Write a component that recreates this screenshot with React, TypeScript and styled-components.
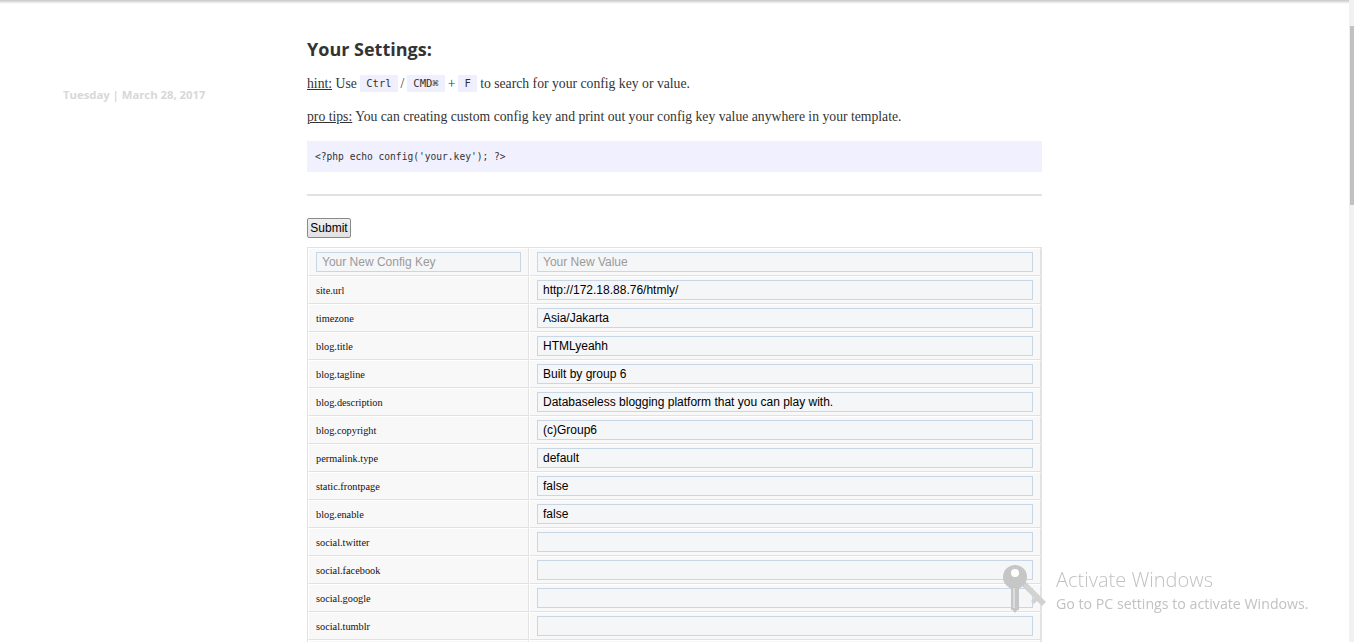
import React from "react";
import styled, { createGlobalStyle } from "styled-components";

const GlobalStyle = createGlobalStyle`
  html, body {
    margin: 0;
    padding: 0;
    background: #ffffff;
    overflow: hidden;
  }
  body {
    font-family: "Liberation Serif", "Times New Roman", serif;
    color: #333333;
  }
  * { box-sizing: border-box; }
`;

const TopShadow = styled.div`
  position: fixed;
  top: 0;
  left: 0;
  right: 5px;
  height: 4px;
  background: linear-gradient(to bottom, rgba(0, 0, 0, 0.22), rgba(0, 0, 0, 0));
  z-index: 5;
`;

const ScrollTrack = styled.div`
  position: fixed;
  top: 0;
  right: 0;
  width: 5px;
  height: 100vh;
  background: #f1f1f1;
  z-index: 6;
`;

const ScrollThumb = styled.div`
  position: absolute;
  top: 26px;
  right: 0;
  width: 4px;
  height: 179px;
  background: #c1c1c1;
`;

const Page = styled.div`
  display: grid;
  grid-template-columns: 244px 735px;
  padding-left: 63px;
  padding-top: 37px;
`;

const Aside = styled.aside`
  padding-top: 50px;
`;

const DateLine = styled.div`
  font-family: "Open Sans", "Liberation Sans", sans-serif;
  font-weight: 700;
  font-size: 11.3px;
  line-height: 15px;
  color: #d8d8d8;
  letter-spacing: 0px;
`;

const Main = styled.main`
  display: flex;
  flex-direction: column;
`;

const Title = styled.h2`
  margin: 0;
  font-family: "Open Sans", "Liberation Sans", sans-serif;
  font-weight: 700;
  font-size: 18px;
  line-height: 24px;
  color: #333333;
`;

const Para = styled.p<{ $gap: number }>`
  margin: ${(p) => p.$gap}px 0 0;
  font-size: 13.7px;
  line-height: 20px;
  color: #333333;
  white-space: nowrap;
`;

const Underline = styled.u`
  text-decoration: underline;
`;

const Kbd = styled.code`
  display: inline-block;
  font-family: "DejaVu Sans Mono", "Liberation Mono", monospace;
  font-size: 10.5px;
  line-height: 17px;
  padding: 0 6px;
  background: #f0effd;
  color: #333333;
  vertical-align: 1px;
`;

const Sep = styled.span`
  margin: 0 3px;
`;

const CodeBlock = styled.pre`
  margin: 14px 0 0;
  height: 31px;
  display: flex;
  align-items: center;
  padding: 0 8px;
  background: #f1f0fe;
  font-family: "DejaVu Sans Mono", "Liberation Mono", monospace;
  font-size: 9.6px;
  color: #333333;
`;

const Rule = styled.hr`
  margin: 22px 0 0;
  border: 0;
  height: 2px;
  background: #e2e2e2;
`;

const ButtonRow = styled.div`
  margin-top: 22px;
`;

const SubmitButton = styled.button`
  width: 44px;
  height: 20px;
  padding: 0;
  font-family: "Liberation Sans", Arial, sans-serif;
  font-size: 12px;
  color: #000;
  background: linear-gradient(#f0f0f0, #e1e1e1);
  border: 1px solid #8a8a8a;
  border-radius: 2px;
`;

const Table = styled.table`
  margin-top: 9px;
  width: 735px;
  table-layout: fixed;
  border-collapse: separate;
  border-spacing: 0;
  border: 1px solid #e2e2e2;
`;

const Cell = styled.td<{ $w: number }>`
  width: ${(p) => p.$w}px;
  padding: 3px 7px;
  background: #f8f8f8;
  border-top: 1px solid #ffffff;
  border-left: 1px solid #ffffff;
  border-right: 1px solid #e2e2e2;
  border-bottom: 1px solid #e2e2e2;
  font-family: "Liberation Serif", "Times New Roman", serif;
  font-size: 10.3px;
  color: #111;
  height: 28px;
  vertical-align: middle;
`;

const Field = styled.input`
  display: block;
  width: 100%;
  height: 20px;
  margin: 0;
  padding: 0 5px;
  border: 1px solid #c8d6e6;
  background: #f5f6f8;
  font-family: "Liberation Sans", Arial, sans-serif;
  font-size: 12px;
  color: #000;
  outline: none;
  &::placeholder {
    color: #9a9a9a;
  }
`;

const Watermark = styled.div`
  position: fixed;
  left: 1002px;
  top: 564px;
  display: flex;
  gap: 8px;
  pointer-events: none;
  z-index: 4;
`;

const WatermarkText = styled.div`
  display: flex;
  flex-direction: column;
  font-family: "Open Sans", "Liberation Sans", sans-serif;
  color: #c2c2c2;
  padding-top: 4px;
`;

const WmTitle = styled.div`
  font-size: 20px;
  font-weight: 300;
  line-height: 24px;
`;

const WmSub = styled.div`
  font-size: 14.2px;
  font-weight: 400;
  line-height: 20px;
  margin-top: 2px;
`;

const rows: [string, string][] = [
  ["site.url", "http://172.18.88.76/htmly/"],
  ["timezone", "Asia/Jakarta"],
  ["blog.title", "HTMLyeahh"],
  ["blog.tagline", "Built by group 6"],
  ["blog.description", "Databaseless blogging platform that you can play with."],
  ["blog.copyright", "(c)Group6"],
  ["permalink.type", "default"],
  ["static.frontpage", "false"],
  ["blog.enable", "false"],
  ["social.twitter", ""],
  ["social.facebook", ""],
  ["social.google", ""],
  ["social.tumblr", ""],
  ["social.github", ""],
  ["social.youtube", ""],
  ["comment.system", "disable"],
];

const KeyIcon = () => (
  <svg width="46" height="50" viewBox="0 0 46 50">
    <path d="M20 22 L24 18 L44 38 L40 42 L35 37 L32 40 L29 37 L32 34 Z" fill="#d2d2d2" />
    <g fill="#c6c6c6">
      <circle cx="13" cy="13" r="12" />
      <rect x="9" y="20" width="8" height="26" />
      <path d="M9 44 L13 49 L17 44 Z" />
    </g>
    <circle cx="13" cy="9" r="4" fill="#ffffff" />
    <rect x="11" y="24" width="2" height="20" fill="#dcdcdc" />
  </svg>
);

export default function App() {
  return (
    <>
      <GlobalStyle />
      <TopShadow />
      <ScrollTrack>
        <ScrollThumb />
      </ScrollTrack>
      <Page>
        <Aside>
          <DateLine>Tuesday | March 28, 2017</DateLine>
        </Aside>
        <Main>
          <Title>Your Settings:</Title>
          <Para $gap={13}>
            <Underline>hint:</Underline> Use <Kbd>Ctrl</Kbd>
            <Sep>/</Sep>
            <Kbd>CMD⌘</Kbd>
            <Sep>+</Sep>
            <Kbd>F</Kbd> to search for your config key or value.
          </Para>
          <Para $gap={13}>
            <Underline>pro tips:</Underline> You can creating custom config key and print out your
            config key value anywhere in your template.
          </Para>
          <CodeBlock>{"<?php echo config('your.key'); ?>"}</CodeBlock>
          <Rule />
          <ButtonRow>
            <SubmitButton type="button">Submit</SubmitButton>
          </ButtonRow>
          <Table>
            <tbody>
              <tr>
                <Cell $w={221}>
                  <Field placeholder="Your New Config Key" />
                </Cell>
                <Cell $w={512}>
                  <Field placeholder="Your New Value" />
                </Cell>
              </tr>
              {rows.map(([k, v]) => (
                <tr key={k}>
                  <Cell $w={221}>{k}</Cell>
                  <Cell $w={512}>
                    <Field defaultValue={v} />
                  </Cell>
                </tr>
              ))}
            </tbody>
          </Table>
        </Main>
      </Page>
      <Watermark>
        <KeyIcon />
        <WatermarkText>
          <WmTitle>Activate Windows</WmTitle>
          <WmSub>Go to PC settings to activate Windows.</WmSub>
        </WatermarkText>
      </Watermark>
    </>
  );
}
